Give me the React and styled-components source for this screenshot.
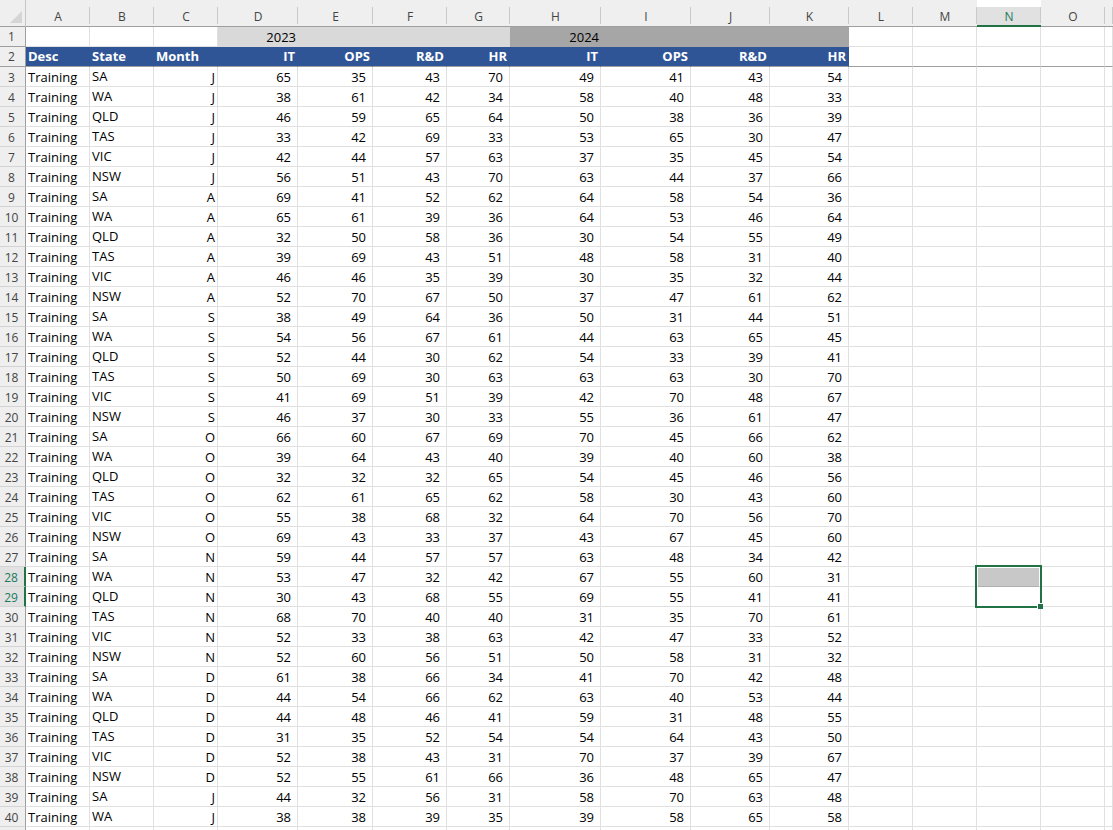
import React from "react";
import styled, { createGlobalStyle, css } from "styled-components";

const Global = createGlobalStyle`
  html, body { margin: 0; padding: 0; height: 100%; overflow: hidden; background: #fff; }
`;

const COLS = ["A","B","C","D","E","F","G","H","I","J","K","L","M","N","O","P"];
const WIDTHS = "26px 64px 64px 64px 80px 75px 74px 63px 91px 90px 79px 79px 64px 64px 64px 64px 1fr";
const HEADS = ["IT","OPS","R&D","HR","IT","OPS","R&D","HR"];
const RAW = `SA J 65 35 43 70 49 41 43 54
WA J 38 61 42 34 58 40 48 33
QLD J 46 59 65 64 50 38 36 39
TAS J 33 42 69 33 53 65 30 47
VIC J 42 44 57 63 37 35 45 54
NSW J 56 51 43 70 63 44 37 66
SA A 69 41 52 62 64 58 54 36
WA A 65 61 39 36 64 53 46 64
QLD A 32 50 58 36 30 54 55 49
TAS A 39 69 43 51 48 58 31 40
VIC A 46 46 35 39 30 35 32 44
NSW A 52 70 67 50 37 47 61 62
SA S 38 49 64 36 50 31 44 51
WA S 54 56 67 61 44 63 65 45
QLD S 52 44 30 62 54 33 39 41
TAS S 50 69 30 63 63 63 30 70
VIC S 41 69 51 39 42 70 48 67
NSW S 46 37 30 33 55 36 61 47
SA O 66 60 67 69 70 45 66 62
WA O 39 64 43 40 39 40 60 38
QLD O 32 32 32 65 54 45 46 56
TAS O 62 61 65 62 58 30 43 60
VIC O 55 38 68 32 64 70 56 70
NSW O 69 43 33 37 43 67 45 60
SA N 59 44 57 57 63 48 34 42
WA N 53 47 32 42 67 55 60 31
QLD N 30 43 68 55 69 55 41 41
TAS N 68 70 40 40 31 35 70 61
VIC N 52 33 38 63 42 47 33 52
NSW N 52 60 56 51 50 58 31 32
SA D 61 38 66 34 41 70 42 48
WA D 44 54 66 62 63 40 53 44
QLD D 44 48 46 41 59 31 48 55
TAS D 31 35 52 54 54 64 43 50
VIC D 52 38 43 31 70 37 39 67
NSW D 52 55 61 66 36 48 65 47
SA J 44 32 56 31 58 70 63 48
WA J 38 38 39 35 39 58 65 58`.split("\n").map((l) => l.split(" "));

const Sheet = styled.div`
  display: grid;
  grid-template-columns: ${WIDTHS};
  grid-template-rows: 27px repeat(41, 20px);
  width: 1113px;
  height: 830px;
  overflow: hidden;
  position: relative;
  font-family: "Open Sans", "Noto Sans", sans-serif;
  font-size: 13px;
  color: #000;
  background: #fff;
`;

const Corner = styled.div`
  background: #efefef;
  border-right: 1px solid #c6c6c6;
  border-bottom: 1px solid #9f9f9f;
  padding: 11px 0 0 10px;
  box-sizing: border-box;
`;

const ColHead = styled.div`
  box-sizing: border-box;
  margin-top: ${(p) => (p.$active ? "7px" : "0")};
  padding-top: ${(p) => (p.$active ? "2px" : "9px")};
  background: ${(p) => (p.$active ? "#e1e1e1" : "#efefef")};
  border-bottom: ${(p) => (p.$active ? "2px solid #217346" : "1px solid #9f9f9f")};
  position: relative;
  font-size: 12px;
  line-height: 16px;
  text-align: center;
  color: ${(p) => (p.$active ? "#1a7a5c" : "#444")};
  &::after {
    content: "";
    position: absolute;
    right: 0;
    top: ${(p) => (p.$active ? "0" : "7px")};
    bottom: 2px;
    width: 1px;
    background: #c9c9c9;
  }
`;

const RowHead = styled.div`
  box-sizing: border-box;
  background: ${(p) => (p.$active ? "#e1e1e1" : "#efefef")};
  color: ${(p) => (p.$active ? "#1a7a5c" : "#444")};
  font-size: 12px;
  line-height: 19px;
  text-align: center;
  padding: ${(p) => (p.$frozen ? "0" : "1px")} 2px 0 0;
  border-right: ${(p) => (p.$active ? "2px solid #217346" : "1px solid #9f9f9f")};
  border-bottom: 1px solid ${(p) => (p.$frozen ? "#9f9f9f" : "#d4d4d4")};
`;

const Cell = styled.div`
  box-sizing: border-box;
  border-right: 1px solid #e0e0e0;
  border-bottom: 1px solid #e0e0e0;
  line-height: 19px;
  padding-top: 1px;
  white-space: nowrap;
  overflow: hidden;
  text-align: ${(p) => p.$align || "left"};
  padding-right: ${(p) => (p.$align === "right" ? "6px" : "0")};
  padding-left: ${(p) => (p.$align === "right" ? "0" : "2px")};
  ${(p) => p.$frozen && css`border-bottom-color: #9f9f9f;`}
  ${(p) => p.$nudge && css`line-height: 17px;`}
  ${(p) => p.$month && css`padding-right: 2px;`}
`;

const YearCell = styled(Cell)`
  background: ${(p) => p.$fill};
  border-right-color: ${(p) => p.$fill};
  border-bottom: 0;
  text-align: right;
  padding: 0 1px 0 0;
  line-height: 20px;
`;

const Banner = styled(Cell)`
  background: #2f5597;
  border-right-color: #2f5597;
  border-bottom-color: #9f9f9f;
  color: #fff;
  font-weight: 700;
  padding-top: 0;
  padding-right: ${(p) => (p.$align === "right" ? "2px" : "0")};
`;

const Selected = styled.div`
  grid-column: 15 / 16;
  grid-row: 29 / 31;
  position: absolute;
  top: -2px;
  left: -2px;
  right: -1px;
  bottom: -1px;
  box-sizing: border-box;
  border: 2px solid #217346;
  z-index: 2;
`;

const SelectedFill = styled.div`
  height: 19px;
  margin: 1px 0 0 1px;
  width: 61px;
  background: #c8c8c8;
  border-bottom: 1px solid #b0b0b0;
  box-sizing: border-box;
`;

const FillHandle = styled.div`
  position: absolute;
  right: -3px;
  bottom: -3px;
  width: 5px;
  height: 5px;
  background: #217346;
  border-left: 1px solid #fff;
  border-top: 1px solid #fff;
`;

const Blank = ({ n, frozen }) =>
  Array.from({ length: n }, (_, i) => <Cell key={i} $frozen={frozen} />);

export default function App() {
  return (
    <>
      <Global />
      <Sheet>
        <Corner>
          <svg width="12" height="12" viewBox="0 0 12 12" style={{ display: "block" }}>
            <polygon points="12,0 12,12 0,12" fill="#d5d5d5" />
          </svg>
        </Corner>
        {COLS.map((c) => (
          <ColHead key={c} $active={c === "N"}>{c === "P" ? "" : c}</ColHead>
        ))}

        <RowHead $frozen>1</RowHead>
        <Cell /><Cell /><Cell />
        <YearCell $fill="#d9d9d9">2023</YearCell>
        <YearCell $fill="#d9d9d9" /><YearCell $fill="#d9d9d9" /><YearCell $fill="#d9d9d9" />
        <YearCell $fill="#a6a6a6">2024</YearCell>
        <YearCell $fill="#a6a6a6" /><YearCell $fill="#a6a6a6" /><YearCell $fill="#a6a6a6" />
        <Blank n={5} />

        <RowHead $frozen>2</RowHead>
        <Banner>Desc</Banner>
        <Banner>State</Banner>
        <Banner>Month</Banner>
        {HEADS.map((h, i) => (
          <Banner key={i} $align="right">{h}</Banner>
        ))}
        <Blank n={5} frozen />

        {RAW.map(([state, month, ...nums], i) => {
          const row = i + 3;
          return (
            <React.Fragment key={row}>
              <RowHead $active={row === 28 || row === 29}>{row}</RowHead>
              <Cell>Training</Cell>
              <Cell $nudge>{state}</Cell>
              <Cell $align="right" $month>{month}</Cell>
              {nums.map((v, j) => (
                <Cell key={j} $align="right">{v}</Cell>
              ))}
              <Blank n={5} />
            </React.Fragment>
          );
        })}

        <RowHead />
        <Blank n={16} />

        <Selected>
          <SelectedFill />
          <FillHandle />
        </Selected>
      </Sheet>
    </>
  );
}
